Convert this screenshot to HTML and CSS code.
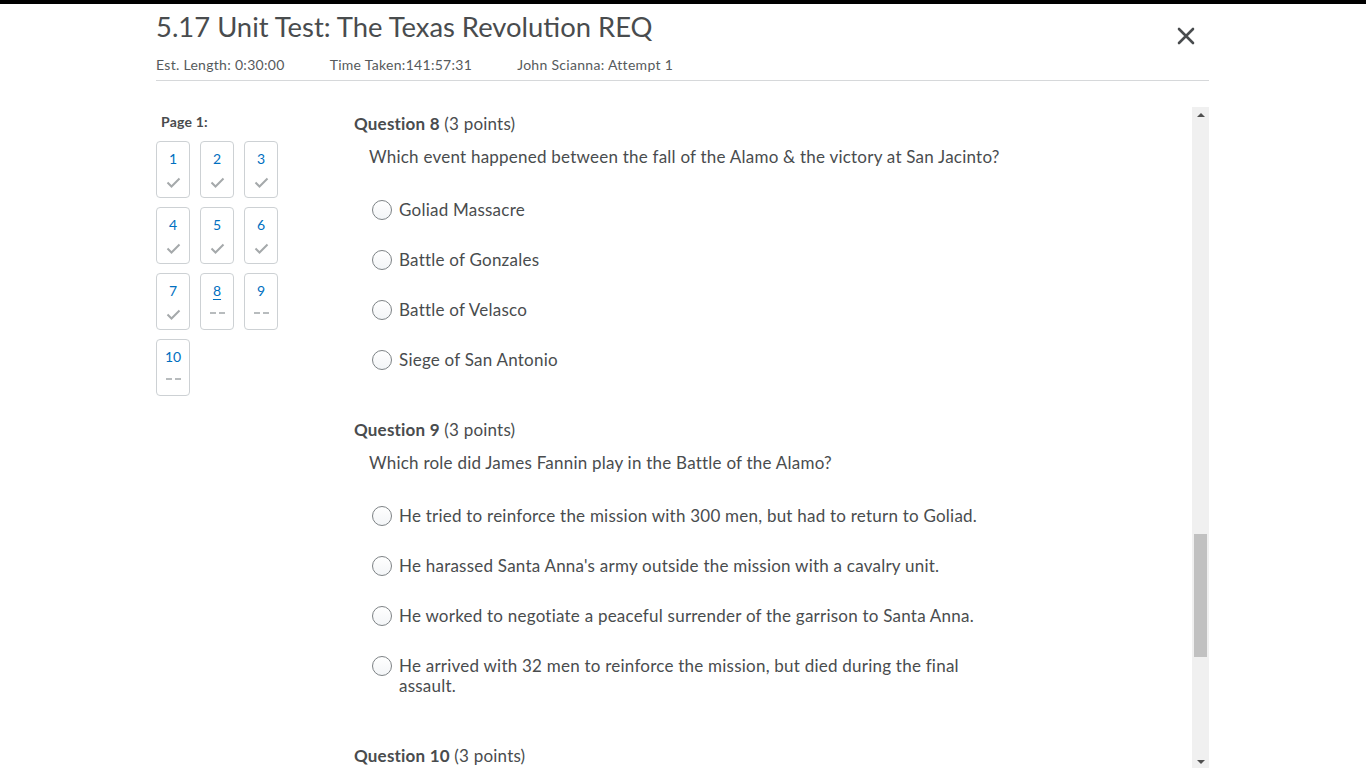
FILE: index.html
```html
<!DOCTYPE html>
<html>
<head>
<meta charset="utf-8">
<link rel="stylesheet" href="styles.css">
</head>
<body>
<div class="topbar"></div>
<div class="wrap">
  <header class="header">
    <div class="title-row">
      <h1 class="title">5.17 Unit Test: The Texas Revolution REQ</h1>
      <button class="close" aria-label="Close">
        <svg width="18" height="18" viewBox="0 0 18 18"><path d="M2 2 L16 16 M16 2 L2 16" stroke="#494c4e" stroke-width="2.6" stroke-linecap="round" fill="none"/></svg>
      </button>
    </div>
    <div class="meta">
      <span class="meta-item">Est. Length: 0:30:00</span>
      <span class="meta-item">Time Taken:141:57:31</span>
      <span class="meta-item">John Scianna: Attempt 1</span>
    </div>
  </header>

  <div class="main">
    <nav class="nav">
      <div class="nav-label">Page 1:</div>
      <div class="grid">
        <a class="qbox"><span class="num">1</span><svg class="check" width="15" height="11" viewBox="0 0 15 11"><path d="M1.5 5.5 L5.5 9.5 L13.5 1.5" stroke="#a5a9ab" stroke-width="2" fill="none"/></svg></a>
        <a class="qbox"><span class="num">2</span><svg class="check" width="15" height="11" viewBox="0 0 15 11"><path d="M1.5 5.5 L5.5 9.5 L13.5 1.5" stroke="#a5a9ab" stroke-width="2" fill="none"/></svg></a>
        <a class="qbox"><span class="num">3</span><svg class="check" width="15" height="11" viewBox="0 0 15 11"><path d="M1.5 5.5 L5.5 9.5 L13.5 1.5" stroke="#a5a9ab" stroke-width="2" fill="none"/></svg></a>
        <a class="qbox"><span class="num">4</span><svg class="check" width="15" height="11" viewBox="0 0 15 11"><path d="M1.5 5.5 L5.5 9.5 L13.5 1.5" stroke="#a5a9ab" stroke-width="2" fill="none"/></svg></a>
        <a class="qbox"><span class="num">5</span><svg class="check" width="15" height="11" viewBox="0 0 15 11"><path d="M1.5 5.5 L5.5 9.5 L13.5 1.5" stroke="#a5a9ab" stroke-width="2" fill="none"/></svg></a>
        <a class="qbox"><span class="num">6</span><svg class="check" width="15" height="11" viewBox="0 0 15 11"><path d="M1.5 5.5 L5.5 9.5 L13.5 1.5" stroke="#a5a9ab" stroke-width="2" fill="none"/></svg></a>
        <a class="qbox"><span class="num">7</span><svg class="check" width="15" height="11" viewBox="0 0 15 11"><path d="M1.5 5.5 L5.5 9.5 L13.5 1.5" stroke="#a5a9ab" stroke-width="2" fill="none"/></svg></a>
        <a class="qbox"><span class="num current">8</span><span class="dash"></span></a>
        <a class="qbox"><span class="num">9</span><span class="dash"></span></a>
        <a class="qbox"><span class="num">10</span><span class="dash"></span></a>
      </div>
    </nav>

    <div class="content">
      <div class="questions">
        <section class="question">
          <h2 class="q-head"><b>Question 8</b> (3 points)</h2>
          <p class="q-text">Which event happened between the fall of the Alamo &amp; the victory at San Jacinto?</p>
          <ul class="options">
            <li class="option"><span class="radio"></span><span class="opt-text">Goliad Massacre</span></li>
            <li class="option"><span class="radio"></span><span class="opt-text">Battle of Gonzales</span></li>
            <li class="option"><span class="radio"></span><span class="opt-text">Battle of Velasco</span></li>
            <li class="option"><span class="radio"></span><span class="opt-text">Siege of San Antonio</span></li>
          </ul>
        </section>
        <section class="question">
          <h2 class="q-head"><b>Question 9</b> (3 points)</h2>
          <p class="q-text">Which role did James Fannin play in the Battle of the Alamo?</p>
          <ul class="options">
            <li class="option"><span class="radio"></span><span class="opt-text">He tried to reinforce the mission with 300 men, but had to return to Goliad.</span></li>
            <li class="option"><span class="radio"></span><span class="opt-text">He harassed Santa Anna's army outside the mission with a cavalry unit.</span></li>
            <li class="option"><span class="radio"></span><span class="opt-text">He worked to negotiate a peaceful surrender of the garrison to Santa Anna.</span></li>
            <li class="option"><span class="radio"></span><span class="opt-text">He arrived with 32 men to reinforce the mission, but died during the final assault.</span></li>
          </ul>
        </section>
        <section class="question">
          <h2 class="q-head"><b>Question 10</b> (3 points)</h2>
        </section>
      </div>
      <div class="scrollbar">
        <span class="arrow up"></span>
        <div class="track"><div class="thumb"></div></div>
        <span class="arrow down"></span>
      </div>
    </div>
  </div>
</div>
</body>
</html>
```

FILE: styles.css
```css
* { box-sizing: border-box; }
html, body { margin: 0; padding: 0; height: 100%; overflow: hidden; background: #fff; }
body { font-family: Lato, "Open Sans", "Liberation Sans", sans-serif; color: #494c4e; }

.topbar { height: 4px; background: #000; }

.wrap { width: 1053px; margin-left: 156px; }

.header { border-bottom: 1px solid #d6d8da; padding-top: 6px; padding-bottom: 5px; }
.title-row { display: flex; justify-content: space-between; align-items: flex-start; }
.title { margin: 0; font-size: 27.4px; font-weight: 400; line-height: 34px; color: #494c4e; letter-spacing: 0; }
.close { border: 0; background: none; padding: 0; margin: 17px 14px 0 0; width: 18px; height: 18px; display: block; }
.close svg { display: block; }

.meta { display: flex; gap: 45px; margin-top: 10px; font-size: 14px; line-height: 20px; color: #565a5c; letter-spacing: 0.3px; }

.main { display: flex; margin-top: 26px; height: 662px; }

.nav { width: 198px; flex: none; padding-top: 5px; }
.nav-label { font-size: 14px; font-weight: 700; line-height: 20px; padding-left: 5px; margin-bottom: 9px; color: #494c4e; letter-spacing: 0.2px; }
.grid { display: grid; grid-template-columns: repeat(3, 34px); column-gap: 10px; row-gap: 9px; }
.qbox { width: 34px; height: 57px; border: 1px solid #cdd1d4; border-radius: 4px; display: flex; flex-direction: column; align-items: center; padding-top: 8px; }
.num { font-size: 14px; line-height: 18px; color: #006fbf; }
.num.current { text-decoration: underline; text-underline-offset: 3px; }
.check { margin-top: 9px; display: block; }
.dash { width: 15px; height: 2px; margin-top: 12px; background: linear-gradient(to right, #b8bcbe 0 6px, transparent 6px 9px, #b8bcbe 9px 15px); }

.content { flex: 1; display: flex; justify-content: space-between; overflow: hidden; position: relative; }
.questions { width: 660px; padding-top: 5px; }

.question { margin-bottom: 48px; }
.q-head { margin: 0; font-size: 17px; font-weight: 400; line-height: 24px; color: #494c4e; letter-spacing: 0.2px; }
.q-head b { font-weight: 700; }
.q-text { margin: 9px 0 0 15px; font-size: 17px; line-height: 24px; letter-spacing: 0.23px; }
.options { list-style: none; margin: 31px 0 0 18px; padding: 0; display: flex; flex-direction: column; gap: 30px; }
.option { display: flex; align-items: flex-start; font-size: 17px; line-height: 20px; letter-spacing: 0.23px; }
.radio { width: 20px; height: 20px; border: 1px solid #7d8285; border-radius: 50%; background: linear-gradient(#fff, #f3f5f7); flex: none; margin-right: 7px; margin-top: 0; }
.opt-text { max-width: 600px; }

.scrollbar { width: 17px; flex: none; background: #f0f0f0; display: flex; flex-direction: column; align-items: center; margin-right: 0; }
.arrow { width: 0; height: 0; border-left: 4px solid transparent; border-right: 4px solid transparent; flex: none; }
.arrow.up { border-bottom: 4px solid #505050; margin-top: 6px; }
.arrow.down { border-top: 4px solid #505050; margin-bottom: 5px; }
.track { flex: 1; width: 100%; padding: 0 2px; display: flex; flex-direction: column; }
.thumb { height: 123px; background: #c1c1c1; margin-top: 417px; }
```
